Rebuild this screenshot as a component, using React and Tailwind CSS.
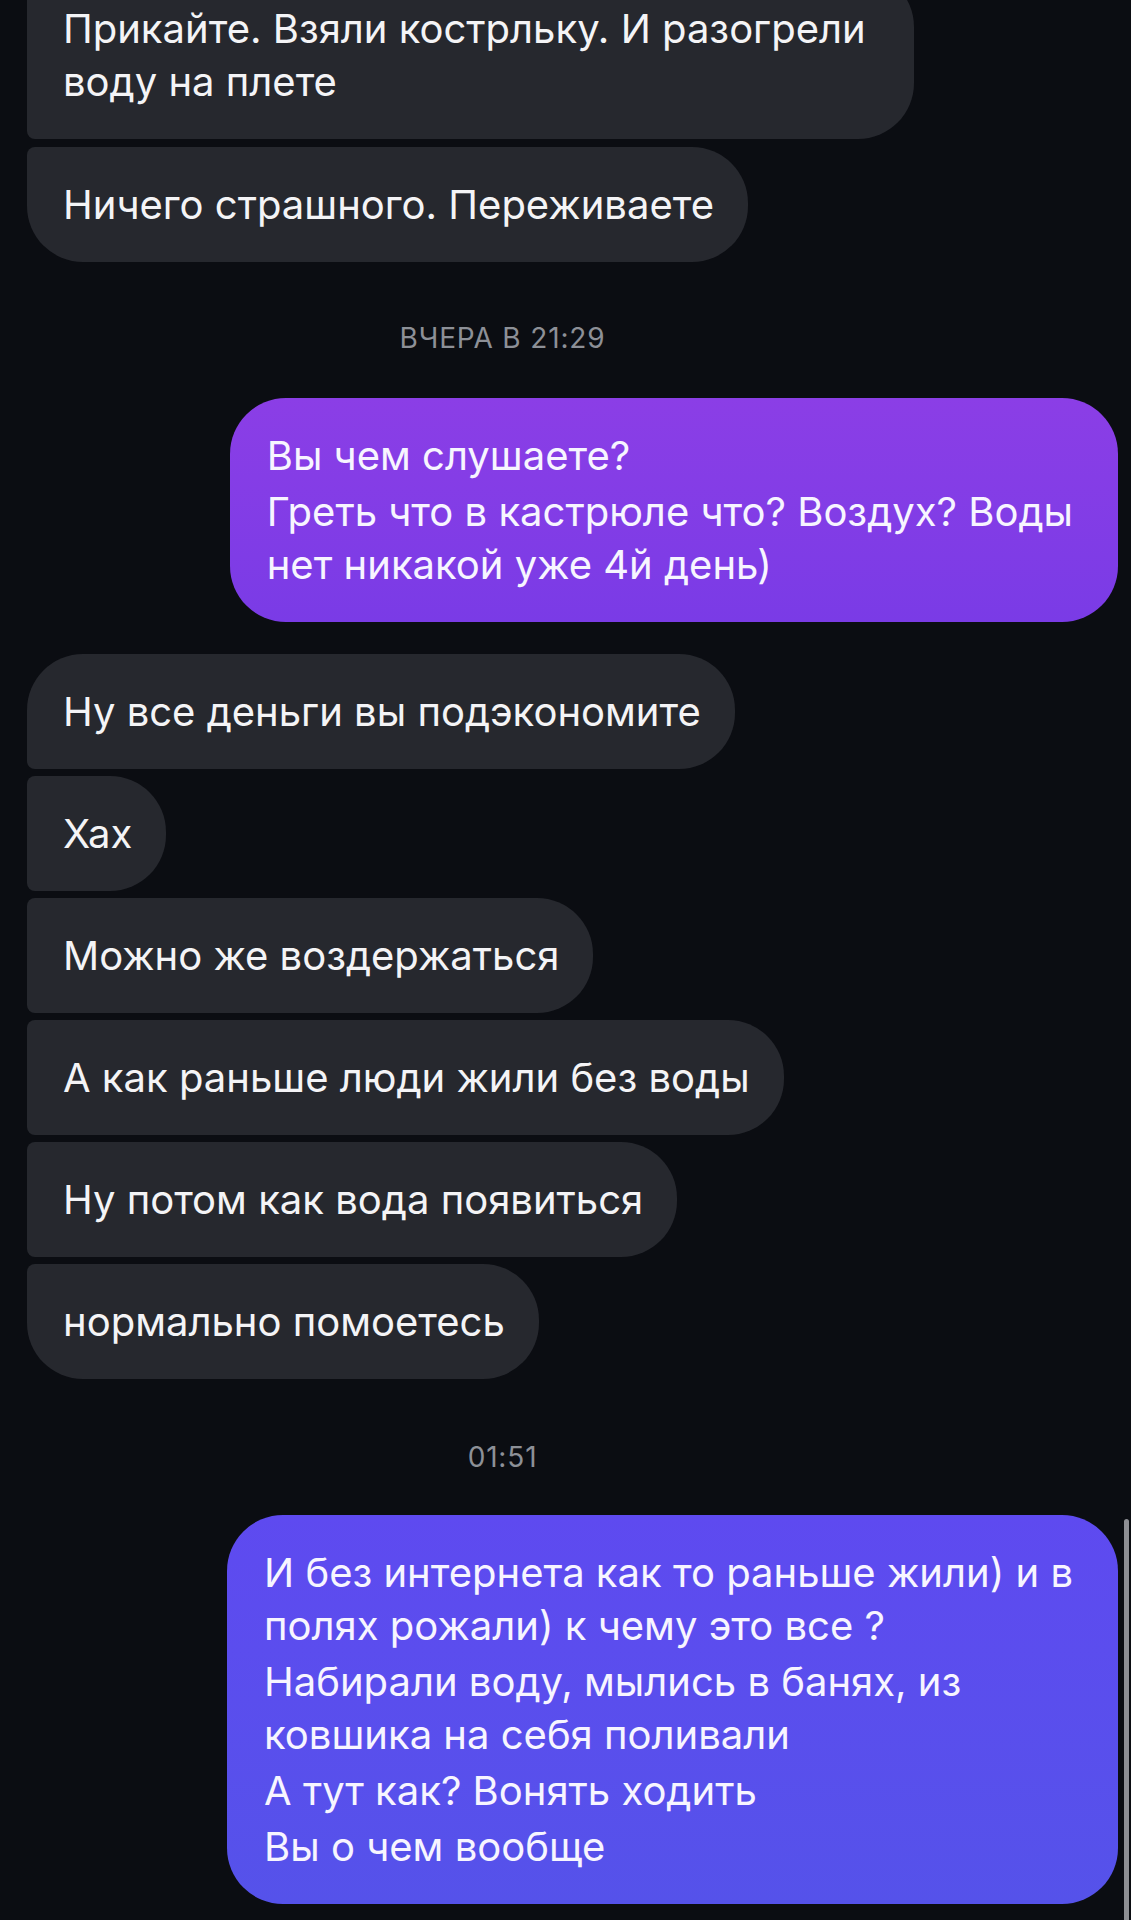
import React from "react";

// chat thread: grey incoming bubbles on the left, gradient outgoing on the right
const incoming = [
  { lines: [["Прикайте. Взяли кострльку. И разогрели", "воду на плете"]], corner: "mid", extra: "pr-[48px]" },
  { lines: [["Ничего страшного. Переживаете"]], corner: "last" },
];

const incoming2 = [
  { lines: [["Ну все деньги вы подэкономите"]], corner: "first" },
  { lines: [["Хах"]], corner: "mid" },
  { lines: [["Можно же воздержаться"]], corner: "mid" },
  { lines: [["А как раньше люди жили без воды"]], corner: "mid" },
  { lines: [["Ну потом как вода появиться"]], corner: "mid" },
  { lines: [["нормально помоетесь"]], corner: "last" },
];

const cornerClass = {
  first: "rounded-tl-[56px] rounded-bl-[8px]",
  mid: "rounded-tl-[8px] rounded-bl-[8px]",
  last: "rounded-tl-[8px] rounded-bl-[56px]",
};

function Paragraphs({ lines }) {
  return (
    <div className="flex flex-col gap-[3px]">
      {lines.map((para, i) => (
        <p key={i}>
          {para.map((l, j) => (
            <span key={j} className="block whitespace-nowrap">{l}</span>
          ))}
        </p>
      ))}
    </div>
  );
}

function Incoming({ lines, corner, extra = "pr-[34px]" }) {
  return (
    <div className="flex justify-start">
      <div
        className={`bg-[#26282e] text-[#f4f4f6] pl-[36px] ${extra} py-[31px] rounded-r-[56px] ${cornerClass[corner]}`}
      >
        <Paragraphs lines={lines} />
      </div>
    </div>
  );
}

function Outgoing({ lines, gradient }) {
  return (
    <div className="flex justify-end">
      <div className={`${gradient} text-[#f7f5ff] pl-[37px] pr-[45px] py-[31px] rounded-[56px]`}>
        <Paragraphs lines={lines} />
      </div>
    </div>
  );
}

function Stamp({ children }) {
  return (
    <div className="flex justify-center pr-[140px]">
      <span className="text-[28px] leading-[32px] tracking-[0.03em] text-[#8d9097]">{children}</span>
    </div>
  );
}

export default function App() {
  return (
    <div
      className="relative h-[1920px] overflow-hidden bg-[#0b0d12] text-[40px] leading-[53px]"
      style={{ fontFamily: 'Inter, "Noto Sans", sans-serif' }}
    >
      <div className="flex flex-col pl-[27px] pr-[13px] mt-[-29px]">
        <div className="flex flex-col gap-[8px]">
          {incoming.map((m, i) => (
            <Incoming key={i} {...m} />
          ))}
        </div>

        <div className="mt-[60px]">
          <Stamp>ВЧЕРА В 21:29</Stamp>
        </div>

        <div className="mt-[44px]">
          <Outgoing
            gradient="bg-gradient-to-b from-[#8b3ee6] to-[#7a3be6]"
            lines={[
              ["Вы чем слушаете?"],
              ["Греть что в кастрюле что? Воздух? Воды", "нет никакой уже 4й день)"],
            ]}
          />
        </div>

        <div className="mt-[32px] flex flex-col gap-[7px]">
          {incoming2.map((m, i) => (
            <Incoming key={i} {...m} />
          ))}
        </div>

        <div className="mt-[62px]">
          <Stamp>01:51</Stamp>
        </div>

        <div className="mt-[42px]">
          <Outgoing
            gradient="bg-gradient-to-b from-[#5e4af0] to-[#5552ea]"
            lines={[
              ["И без интернета как то раньше жили) и в", "полях рожали) к чему это все ?"],
              ["Набирали воду, мылись в банях, из", "ковшика на себя поливали"],
              ["А тут как? Вонять ходить"],
              ["Вы о чем вообще"],
            ]}
          />
        </div>
      </div>

      {/* scroll indicator */}
      <div className="absolute right-[2px] top-[1519px] bottom-0 w-[5px] rounded-t-full bg-[#8e8f94]" />
    </div>
  );
}
